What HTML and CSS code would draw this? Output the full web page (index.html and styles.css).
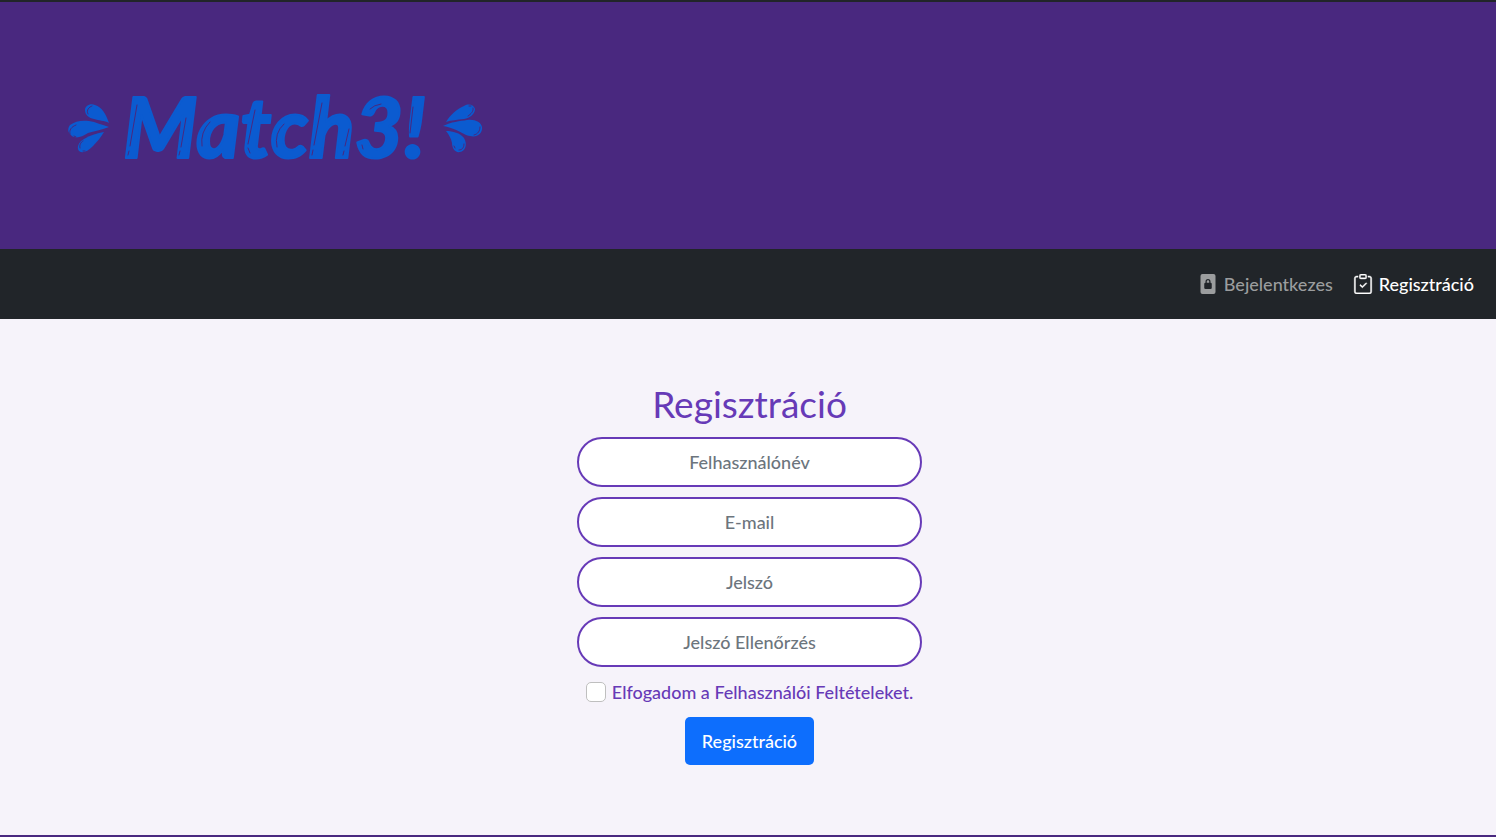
FILE: index.html
```html
<!DOCTYPE html>
<html lang="hu">
<head>
<meta charset="utf-8">
<meta name="viewport" content="width=device-width, initial-scale=1">
<title>Match3! – Regisztráció</title>
<link rel="stylesheet" href="styles.css">
</head>
<body>
<header class="banner">
  <a class="logo" href="#">
    <svg class="logo-art" viewBox="0 0 420 100" role="img" aria-label="Match3!">
      <g transform="translate(2 29)">
        <path class="drop" d="M41 18C36 15 31 16 26 14C21 13 17 10 17 5C17 1 22 -2 27 0C34 2 38 9 41 18Z"/>
        <path class="drop" d="M41 22C33 25 26 26 20 28C14 32 8 34 4 31C0 28 -1 24 2 20C7 16 14 15 21 16C28 17 34 20 41 22Z"/>
        <path class="drop" d="M36 27C33 32 29 37 25 41C20 46 15 49 11 46C8 42 11 37 16 34C23 30 29 28 36 27Z"/>
        <path class="shine" d="M20 9C18 5 21 2 24 1M2 29C1 25 3 22 8 20M6 31L8 32M12 43C11 40 13 37 15 36M15 46L17 46"/>
      </g>
      <text class="logo-text" x="57" y="82">Match3!</text>
      <path class="shine" d="M71 29L64 70M63 75L62 79M120 42L115 71M114 75L113 79M144 46Q134 56 136 70M189 34L182 68M182 72L184 77M218 48Q208 57 211 71M256 27L248 69M247 74L246 79M283 53L279 70M278 75L277 79M304 33Q308 29 315 28M296 69L297 73M347 31L344 57"/>
      <g transform="translate(377 29)">
        <path class="drop" d="M3 17C7 10 14 4 21 1C26 -2 31 0 32 4C32 9 27 13 21 14C14 15 8 15 3 17Z"/>
        <path class="drop" d="M0 21C8 17 17 16 24 15C32 14 38 17 39 22C40 28 34 33 27 31C20 30 16 24 0 21Z"/>
        <path class="drop" d="M3 26C10 26 17 28 21 33C25 40 22 46 17 47C12 48 9 43 9 38C8 33 6 30 3 26Z"/>
        <path class="shine" d="M30 3C31 6 28 9 25 11M26 1L28 1M37 22C37 26 35 29 31 30M21 39C21 43 19 45 16 45M11 41L12 43"/>
      </g>
    </svg>
  </a>
</header>
<nav class="navbar">
  <a class="nav-link" href="#">
    <svg class="icon" viewBox="0 0 16 16" fill="currentColor" aria-hidden="true">
      <rect x="2" width="12" height="16" rx="1.6"/>
      <rect class="lock" x="5" y="7" width="6" height="5" rx="1"/>
      <path class="shackle" d="M6.5 7.5V6a1.5 1.5 0 0 1 3 0v1.5"/>
    </svg>
    <span>Bejelentkezes</span>
  </a>
  <a class="nav-link active" href="#" aria-current="page">
    <svg class="icon clipboard" viewBox="0 0 16 16" fill="currentColor" aria-hidden="true">
      <path fill-rule="evenodd" d="M10.854 7.146a.5.5 0 0 1 0 .708l-3 3a.5.5 0 0 1-.708 0l-1.500-1.500a.5.5 0 1 1 .708-.708L7.500 9.793l2.646-2.647a.5.5 0 0 1 .708 0z"/>
      <path d="M4 1.500H3a2 2 0 0 0-2 2V14a2 2 0 0 0 2 2h10a2 2 0 0 0 2-2V3.500a2 2 0 0 0-2-2h-1v1h1a1 1 0 0 1 1 1V14a1 1 0 0 1-1 1H3a1 1 0 0 1-1-1V3.500a1 1 0 0 1 1-1h1v-1z"/>
      <path d="M9.500 1a.5.5 0 0 1 .5.5v1a.5.5 0 0 1-.5.5h-3a.5.5 0 0 1-.5-.5v-1a.5.5 0 0 1 .5-.5h3zm-3-1A1.500 1.500 0 0 0 5 1.500v1A1.500 1.500 0 0 0 6.500 4h3A1.500 1.500 0 0 0 11 2.500v-1A1.500 1.500 0 0 0 9.500 0h-3z"/>
    </svg>
    <span>Regisztráció</span>
  </a>
</nav>
<main class="page">
  <form class="register">
    <h1 class="title">Regisztráció</h1>
    <input class="field" type="text" placeholder="Felhasználónév" aria-label="Felhasználónév">
    <input class="field" type="email" placeholder="E-mail" aria-label="E-mail">
    <input class="field" type="password" placeholder="Jelszó" aria-label="Jelszó">
    <input class="field" type="password" placeholder="Jelszó Ellenőrzés" aria-label="Jelszó Ellenőrzés">
    <div class="terms">
      <input class="check" type="checkbox" id="terms">
      <label for="terms">Elfogadom a Felhasználói Feltételeket.</label>
    </div>
    <button class="submit" type="submit">Regisztráció</button>
  </form>
</main>
</body>
</html>
```
FILE: styles.css
```css
* {
  box-sizing: border-box;
}

body {
  margin: 0;
  min-height: 100vh;
  display: flex;
  flex-direction: column;
  background: #f6f3fa;
  border-top: 2px solid #212529;
  border-bottom: 2px solid #49287f;
  color: #673ab7;
  font: 500 18px/30px Lato, "Open Sans", sans-serif;
}

.banner {
  background: #49287f;
  padding: 74px 66px 73px;
}

.logo {
  display: block;
  width: 420px;
  max-width: 100%;
}

.logo-art {
  display: block;
  width: 100%;
  overflow: visible;
}

.logo-text {
  fill: #0b5bd0;
  stroke: #0b5bd0;
  stroke-width: 2px;
  stroke-linejoin: round;
  font-size: 84px;
  font-weight: 900;
  font-style: italic;
}

.drop {
  fill: #0b5bd0;
}

.shine {
  fill: none;
  stroke: #49287f;
  stroke-width: 1;
  stroke-linecap: round;
}

.navbar {
  display: flex;
  justify-content: flex-end;
  gap: 20px;
  padding: 20px 22px;
  background: #212529;
}

.nav-link {
  display: flex;
  align-items: center;
  gap: 6px;
  color: #9b9d9e;
  text-decoration: none;
}

.nav-link.active {
  color: #fff;
}

.icon {
  width: 20px;
  height: 20px;
}

.clipboard {
  stroke: currentColor;
  stroke-width: 0.3;
}

.lock {
  fill: #212529;
}

.shackle {
  fill: none;
  stroke: #212529;
}

.page {
  flex: 1;
  padding: 61px 12px 70px 15px;
}

.register {
  display: flex;
  flex-direction: column;
  align-items: center;
  gap: 10px;
  max-width: 345px;
  margin: 0 auto;
}

.title {
  margin: 0;
  font-size: 37px;
  line-height: 47px;
  font-weight: 400;
}

.field {
  width: 100%;
  height: 50px;
  padding: 8px 16px;
  border: 2px solid #673ab7;
  border-radius: 25px;
  background: #fff;
  color: #212529;
  font: inherit;
  text-align: center;
}

.field::placeholder {
  color: #6c757d;
  opacity: 1;
}

.terms {
  display: flex;
  align-items: center;
  gap: 6px;
  white-space: nowrap;
}

.check {
  appearance: none;
  width: 20px;
  height: 20px;
  margin: 0;
  border: 1px solid #bfbfbf;
  border-radius: 5px;
  background: #fff;
}

.check:checked {
  border-color: #0d6efd;
  background: #0d6efd;
}

.submit {
  padding: 9px 17px;
  border: 0;
  border-radius: 5px;
  background: #0d6efd;
  color: #fff;
  font: inherit;
}
```
